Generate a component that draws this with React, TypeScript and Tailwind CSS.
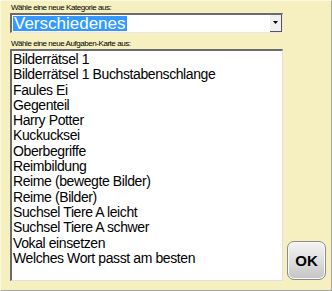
import React from "react";

const items = [
  "Bilderrätsel 1",
  "Bilderrätsel 1 Buchstabenschlange",
  "Faules Ei",
  "Gegenteil",
  "Harry Potter",
  "Kuckucksei",
  "Oberbegriffe",
  "Reimbildung",
  "Reime (bewegte Bilder)",
  "Reime (Bilder)",
  "Suchsel Tiere A leicht",
  "Suchsel Tiere A schwer",
  "Vokal einsetzen",
  "Welches Wort passt am besten",
];

export default function App() {
  return (
    <div className="w-[332px] h-[291px] bg-[#f6efbf] border-t border-l border-t-[#fbf7e0] border-l-[#fbf7e0] border-r border-b border-r-[#a6a6a6] border-b-[#a6a6a6] flex flex-col pl-[9px] pt-[2px] font-['Liberation_Sans',Arial,sans-serif] text-black">
      <div className="pl-[1px] text-[8px] leading-[10px] tracking-[-0.45px]">Wähle eine neue Kategorie aus:</div>
      <div className="w-[273px] h-[20px] bg-white border-t-2 border-l-2 border-t-[#6b6b6b] border-l-[#6b6b6b] border-b border-r border-b-[#e8e8e8] border-r-[#e8e8e8] flex items-center">
        <span className="ml-[1px] bg-[#3399ff] text-white text-[17px] leading-[15px] px-[1px]">Verschiedenes</span>
        <div className="ml-auto w-[12px] h-[17px] bg-[#f0f0f0] border-r border-b border-r-[#555] border-b-[#555] flex items-center justify-center">
          <svg width="6" height="4" viewBox="0 0 6 4"><path d="M0 0H5L2.5 3Z" fill="#000" /></svg>
        </div>
      </div>
      <div className="pl-[1px] mt-[6px] text-[8px] leading-[10px] tracking-[-0.45px]">Wähle eine neue Aufgaben-Karte aus:</div>
      <div className="flex items-end gap-[4px]">
        <div className="w-[273px] h-[232px] bg-white border-t-2 border-l-2 border-t-[#6b6b6b] border-l-[#6b6b6b] border-b border-r border-b-[#e0e0e0] border-r-[#e0e0e0] pt-[1px] pl-[1px]">
          {items.map((t) => (
            <div key={t} className="text-[14px] leading-[15.3px] whitespace-nowrap tracking-[-0.4px]">{t}</div>
          ))}
        </div>
        <div className="mb-[1px] w-[39px] h-[39px] rounded-[7px] border border-[#8a8a8a] bg-gradient-to-b from-[#f4f4f4] via-[#dedede] to-[#c4c4c4] shadow-[inset_0_0_0_1px_#fafafa] flex items-center justify-center">
          <span className="text-[15px] font-bold leading-none">OK</span>
        </div>
      </div>
    </div>
  );
}
